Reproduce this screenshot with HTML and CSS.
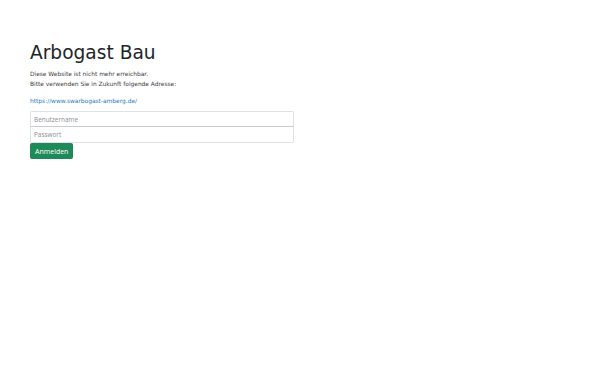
FILE: index.html
```html
<!DOCTYPE html>
<html>

<head>
    <title>Arbogast Bau</title>
    <meta charset="UTF-8">
    <link rel="stylesheet" href="styles.css">
</head>

<body>
    <div class='container'>
        <h1>Arbogast Bau</h1>
        <p>Diese Website ist nicht mehr erreichbar.<br>Bitte verwenden Sie in Zukunft folgende Adresse:</p>
        <p class='link'><a href='https://www.swarbogast-amberg.de/'>https://www.swarbogast-amberg.de/</a></p>
        <form class='login'>
            <input type='text' class='field first' placeholder='Benutzername'>
            <input type='password' class='field last' placeholder='Passwort'>
            <button type='button' class='btn'>Anmelden</button>
        </form>
    </div>
</body>

</html>
```

FILE: styles.css
```css
html,
body
{
    margin: 0;
    background-color: #fff;
    color: #212529;
    font-family: "DejaVu Sans", sans-serif;
}

.container
{
    padding: 41px 30px 0 30px;
}

h1
{
    margin: 0 0 4px 0;
    font-size: 18.6px;
    font-weight: 400;
    line-height: 24px;
}

p
{
    margin: 0 0 7px 0;
    font-size: 5.9px;
    line-height: 10px;
    color: #3a3d40;
}

p.link
{
    margin-bottom: 5px;
}

a
{
    color: #2a7ac0;
    text-decoration: none;
}

.login
{
    width: 264px;
    display: flex;
    flex-direction: column;
    align-items: flex-start;
}

.field
{
    box-sizing: border-box;
    width: 100%;
    height: 16px;
    margin: 0;
    padding: 0 3px;
    border: 1px solid #dee2e6;
    font-family: "Open Sans", sans-serif;
    font-size: 6.4px;
    color: #212529;
    outline: none;
}

.field::placeholder
{
    color: #8a8f94;
}

.field.first
{
    border-radius: 2px 2px 0 0;
    border-bottom-color: #c8ccd0;
}

.field.last
{
    border-top: none;
    border-radius: 0 0 2px 2px;
}

.btn
{
    height: 16px;
    padding: 0 5px;
    border: none;
    border-radius: 2px;
    background-color: #1e8a5a;
    color: #fff;
    font-family: "Open Sans", sans-serif;
    font-size: 7px;
}
```
